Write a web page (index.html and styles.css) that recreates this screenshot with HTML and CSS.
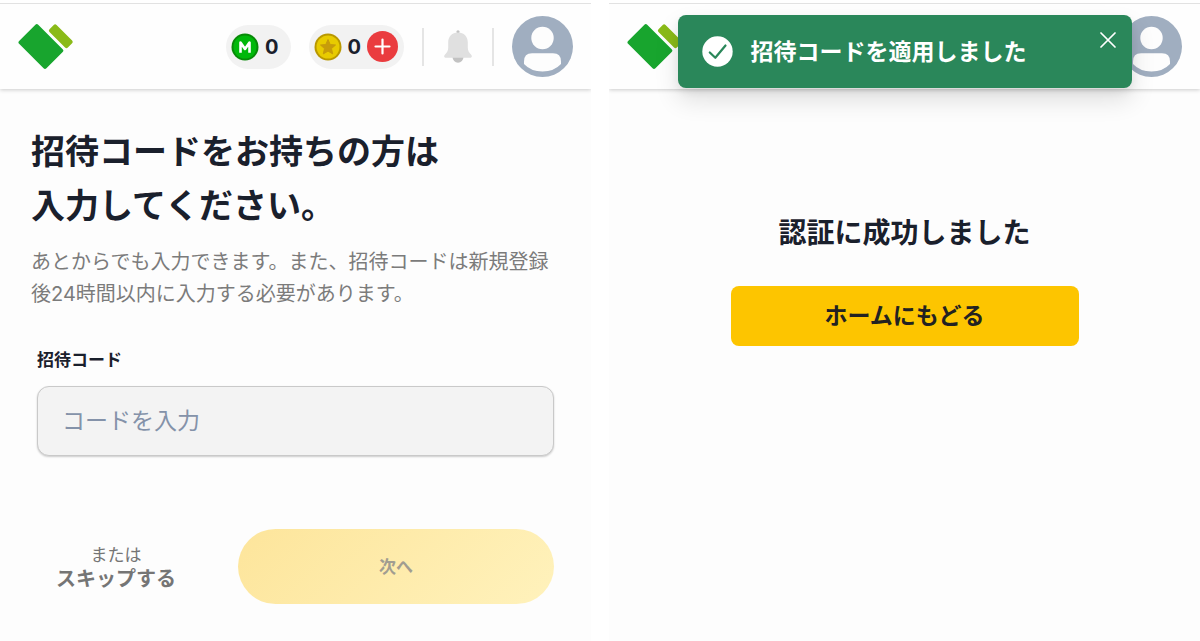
FILE: index.html
```
<!DOCTYPE html>
<html lang="ja">
<head>
    <meta charset="utf-8" />
    <title>招待コード</title>
    <link rel="stylesheet" href="styles.css">
</head>
<body>
    <!-- shared drawings -->
    <svg class="defs" width="0" height="0" aria-hidden="true">
        <symbol id="logo" viewBox="0 0 56 48">
            <rect x="-13.5" y="-19.300" width="27" height="38.600" rx="2" fill="#18a52e" transform="translate(22.900 23.500) rotate(-45)" />
            <rect x="-5" y="-13" width="10" height="26" rx="2" fill="#8aba18" transform="translate(42.800 13.200) rotate(-45)" />
        </symbol>
        <symbol id="avatar" viewBox="0 0 61 61">
            <circle cx="30.5" cy="30.5" r="30.500" fill="#a0aec0" />
            <circle cx="30.5" cy="22" r="11.200" fill="#fdfdfd" />
            <path d="M20 37.300H41Q49 37.300 49 45.500V48Q42 55.500 30.500 55.500T12 48V45.500Q12 37.300 20 37.300Z" fill="#fdfdfd" />
        </symbol>
    </svg>

    <div class="screens">
        <section class="screen">
            <header class="header">
                <a class="logo" href="#" aria-label="ホーム"><svg width="56" height="48"><use href="#logo" /></svg></a>
                <div class="pill">
                    <svg width="28" height="28" viewBox="0 0 28 28">
                        <circle cx="14" cy="14" r="13.5" fill="#078a07" />
                        <circle cx="14" cy="14" r="11.5" fill="#00b80a" />
                        <path d="M9.500 19.800V9.500L14 16L18.500 9.500V19.800" fill="none" stroke="#fff" stroke-width="2.600" stroke-linejoin="round" />
                    </svg>
                    <span>0</span>
                </div>
                <div class="pill pill-coin">
                    <svg width="28" height="28" viewBox="0 0 28 28">
                        <circle cx="14" cy="14" r="13.5" fill="#b99800" />
                        <circle cx="14" cy="14" r="11.500" fill="#e8cb00" />
                        <path d="M14 6.500L16.200 11.500L21.500 12L17.500 15.600L18.700 20.900L14 18.100L9.300 20.900L10.500 15.600L6.500 12L11.800 11.500Z" fill="#c79c0a" stroke="#c79c0a" stroke-linejoin="round" />
                    </svg>
                    <span>0</span>
                    <button class="plus" type="button" aria-label="追加">
                        <svg width="31" height="31" viewBox="0 0 31 31">
                            <circle cx="15.5" cy="15.5" r="15.5" fill="#ea3c3f" />
                            <path d="M15.500 8.500V22.500M8.500 15.500H22.500" stroke="#fff" stroke-width="2.200" stroke-linecap="round" />
                        </svg>
                    </button>
                </div>
                <button class="bell" type="button" aria-label="お知らせ">
                    <svg width="28" height="34" viewBox="0 0 28 34">
                        <circle cx="14" cy="1.800" r="1.600" fill="#c2c2c2" />
                        <path d="M8.500 27H19.500A5.500 5.800 0 0 1 8.500 27Z" fill="#c2c2c2" />
                        <path d="M14 2.500C20 2.500 23.800 6.500 23.800 12.500V17.500C23.800 21 25 22.500 27 24.500C28.500 26 28 27.800 26 27.800H2C0 27.800 -0.500 26 1 24.500C3 22.500 4.200 21 4.200 17.500V12.500C4.200 6.500 8 2.500 14 2.500Z" fill="#e0e0e0" />
                    </svg>
                </button>
                <a class="avatar" href="#" aria-label="マイページ"><svg width="61" height="61"><use href="#avatar" /></svg></a>
            </header>
            <main class="content">
                <h1 class="title">招待コードをお持ちの方は<br>入力してください。</h1>
                <p class="lead">あとからでも入力できます。また、招待コードは新規登録後24時間以内に入力する必要があります。</p>
                <form class="form">
                    <label class="label" for="code">招待コード</label>
                    <input class="code" id="code" type="text" placeholder="コードを入力">
                    <div class="actions">
                        <a class="skip" href="#">または<b>スキップする</b></a>
                        <button class="next" type="submit" disabled>次へ</button>
                    </div>
                </form>
            </main>
        </section>

        <section class="screen">
            <header class="header">
                <a class="logo" href="#" aria-label="ホーム"><svg width="56" height="48"><use href="#logo" /></svg></a>
                <a class="avatar" href="#" aria-label="マイページ"><svg width="61" height="61"><use href="#avatar" /></svg></a>
            </header>
            <div class="toast" role="status">
                <svg width="31" height="31" viewBox="0 0 31 31">
                    <circle cx="15.500" cy="15.500" r="15.200" fill="#fff" />
                    <path d="M7.800 16.500L13.300 21.800L23.500 9.500" fill="none" stroke="#2a875a" stroke-width="2.200" stroke-linecap="round" stroke-linejoin="round" />
                </svg>
                <span>招待コードを適用しました</span>
                <button class="close" type="button" aria-label="閉じる">
                    <svg width="16" height="16" viewBox="0 0 16 16">
                        <path d="M1 1L15 15M15 1L1 15" stroke="#fff" stroke-width="1.700" stroke-linecap="round" />
                    </svg>
                </button>
            </div>
            <main class="content done">
                <h2 class="done-title">認証に成功しました</h2>
                <button class="home" type="button">ホームにもどる</button>
            </main>
        </section>
    </div>
</body>
</html>
```
FILE: styles.css
```
* {
    box-sizing: border-box;
}

body {
    margin: 0;
    background: #fff;
    color: #1a202c;
    font-family: Inter, "Noto Sans CJK JP", sans-serif;
    line-height: 32px;
}

button {
    padding: 0;
    border: 0;
    background: none;
    font: inherit;
}

a {
    color: inherit;
    text-decoration: none;
}

svg {
    display: block;
}

.defs {
    position: absolute;
}

.screens {
    display: flex;
    gap: 18px;
    min-height: 100vh;
    padding-top: 3px;
}

.screen {
    position: relative;
    flex: 1;
    background: #fdfdfd;
}

/* header */
.header {
    display: flex;
    align-items: center;
    height: 86px;
    padding: 0 18px;
    border-top: 1px solid #e2e2e2;
    background: #fefefe;
    box-shadow: 0 1px 4px rgba(0, 0, 0, 0.2);
    clip-path: inset(0 0 -8px 0);
}

.logo {
    margin-right: auto;
}

.pill {
    display: flex;
    align-items: center;
    gap: 6px;
    height: 44px;
    margin-right: 18px;
    padding: 0 12px 0 5px;
    border-radius: 22px;
    background: #f2f2f2;
    font-size: 20px;
    font-weight: 700;
}

.pill-coin {
    padding-right: 6px;
}

.bell {
    display: flex;
    justify-content: center;
    width: 72px;
    margin-right: 18px;
    padding: 2px 0;
    border: solid #e5e5e5;
    border-width: 0 2px;
}

/* invite code */
.content {
    padding: 36px 31px;
}

.title {
    margin: 0;
    font-size: 34px;
    font-weight: 700;
    line-height: 54px;
}

.lead {
    margin: 13px 0 38px;
    color: #7b7b7b;
    font-size: 20px;
}

.form {
    padding: 0 6px;
}

.label {
    display: block;
    margin-bottom: 14px;
    font-size: 17px;
    font-weight: 700;
    line-height: 24px;
}

.code {
    display: block;
    width: 100%;
    height: 70px;
    padding: 0 24px;
    border: 1px solid #c9c9c9;
    border-radius: 12px;
    background: #f3f3f3;
    box-shadow: 0 1px 2px rgba(0, 0, 0, 0.2);
    color: inherit;
    font: inherit;
    font-size: 23px;
}

.code::placeholder {
    color: #8492a9;
    opacity: 1;
}

.actions {
    display: grid;
    grid-template-columns: 1fr 2fr;
    gap: 43px;
    align-items: center;
    margin-top: 73px;
}

.skip {
    color: #757575;
    font-size: 17px;
    line-height: 24px;
    text-align: center;
}

.skip b {
    display: block;
    font-size: 20px;
    font-weight: 700;
}

.next {
    height: 75px;
    border-radius: 38px;
    background: linear-gradient(135deg, #fde59b, #fff2bc);
    color: #a19d91;
    font-size: 17px;
    font-weight: 700;
}

/* success */
.toast {
    position: absolute;
    top: 12px;
    left: 50%;
    display: flex;
    align-items: center;
    gap: 18px;
    width: 454px;
    height: 73px;
    padding: 0 24px;
    border-radius: 8px;
    background: #2a875a;
    box-shadow: 0 12px 24px rgba(0, 0, 0, 0.12), 0 4px 8px rgba(0, 0, 0, 0.06);
    color: #fff;
    font-size: 23px;
    font-weight: 700;
    transform: translateX(-50%);
}

.close {
    position: absolute;
    top: 17px;
    right: 16px;
}

.done {
    padding-top: 122px;
    text-align: center;
}

.done-title {
    margin: 0 0 31px;
    font-size: 28px;
    font-weight: 700;
    line-height: 44px;
}

.home {
    width: 348px;
    max-width: 100%;
    height: 60px;
    border-radius: 8px;
    background: #fdc500;
    color: #222;
    font-size: 23px;
    font-weight: 700;
}
```
